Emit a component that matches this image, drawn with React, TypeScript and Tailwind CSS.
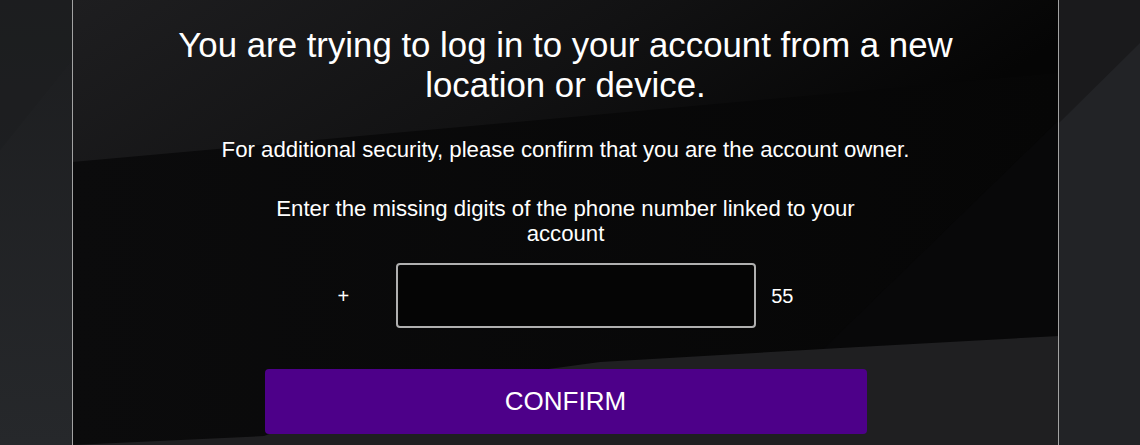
import React from "react";

function Backdrop() {
  return (
    <svg
      className="absolute inset-0 h-full w-full"
      viewBox="0 0 1140 445"
      preserveAspectRatio="none"
      aria-hidden="true"
    >
      <defs>
        <linearGradient id="outerLeft" x1="0" y1="0" x2="0" y2="1">
          <stop offset="0" stopColor="#1c1d1f" />
          <stop offset="1" stopColor="#26282b" />
        </linearGradient>
        <linearGradient id="upper" x1="0" y1="0" x2="1" y2="0.25">
          <stop offset="0" stopColor="#1e1e20" />
          <stop offset="0.55" stopColor="#121213" />
          <stop offset="1" stopColor="#050505" />
        </linearGradient>
        <linearGradient id="lower" x1="0" y1="0" x2="1" y2="0">
          <stop offset="0" stopColor="#0b0b0c" />
          <stop offset="1" stopColor="#060606" />
        </linearGradient>
      </defs>
      {/* outside the card */}
      <rect x="0" y="0" width="1140" height="445" fill="#222326" />
      <rect x="0" y="0" width="72" height="445" fill="url(#outerLeft)" />
      <polygon points="0,0 72,0 72,60 0,150" fill="#1d1e20" opacity="0.6" />
      <polygon points="1059,0 1140,0 1140,43 1059,123" fill="#1a1a1c" />
      {/* inside the card */}
      <rect x="72" y="0" width="987" height="445" fill="url(#lower)" />
      <polygon points="72,0 1059,0 1059,73 72,162" fill="url(#upper)" />
      <polygon points="1059,120 1059,338 840,348 820,352" fill="#080809" />
      <polygon
        points="1059,336 840,348 600,362 380,392 264,436 72,445 1059,445"
        fill="#1f1f21"
      />
    </svg>
  );
}

export default function App() {
  return (
    <main
      className="relative h-[445px] w-full overflow-hidden text-white"
      style={{ fontFamily: '"Liberation Sans", Arial, sans-serif' }}
    >
      <Backdrop />

      {/* Card */}
      <section className="relative ml-[72px] flex h-[445px] w-[987px] flex-col items-center border-x border-[#a3a3a3] pt-[25px]">
        <h1 className="w-[820px] text-center text-[34.8px] leading-[40px] font-normal">
          You are trying to log in to your account from a new location or device.
        </h1>

        <p className="mt-[32px] text-center text-[22.2px] leading-[25px]">
          For additional security, please confirm that you are the account owner.
        </p>

        <p className="mt-[34px] w-[600px] text-center text-[22.2px] leading-[25px]">
          Enter the missing digits of the phone number linked to your account
        </p>

        {/* Phone input row */}
        <div className="mt-[17px] flex w-[602px] items-center">
          <span className="ml-[73px] text-[20px] leading-none">+</span>
          <input
            type="text"
            className="ml-[47px] h-[65px] w-[360px] rounded-[4px] border-2 border-[#b0b0b0] bg-[#050505] px-3 text-[20px] text-white outline-none"
          />
          <span className="ml-[15px] text-[20px] leading-none">55</span>
        </div>

        <button className="mt-[41px] h-[65px] w-[602px] rounded-[4px] bg-[#4d0089] text-[26px] text-white">
          CONFIRM
        </button>
      </section>
    </main>
  );
}
